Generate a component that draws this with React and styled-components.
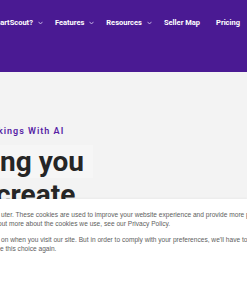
import React from 'react';
import styled, { createGlobalStyle } from 'styled-components';

const GlobalStyle = createGlobalStyle`
  html, body {
    margin: 0;
    padding: 0;
    background: #f3f3f3;
    overflow: hidden;
  }
  body {
    font-family: Roboto, "Liberation Sans", sans-serif;
  }
`;

const Page = styled.div`
  width: 247px;
  height: 296px;
  display: flex;
  flex-direction: column;
  overflow: hidden;
  background: #f3f3f3;
`;

const Header = styled.header`
  flex: 0 0 72px;
  background: #4a1a93;
  display: flex;
  justify-content: flex-end;
  align-items: flex-start;
  padding: 18px 7px 0 0;
  box-sizing: border-box;
  overflow: hidden;
`;

const Nav = styled.nav`
  display: flex;
  align-items: center;
  gap: 12px;
  flex-shrink: 0;
`;

const NavItem = styled.a`
  display: flex;
  align-items: center;
  gap: 5px;
  flex-shrink: 0;
  color: #ffffff;
  font-family: Roboto, "Liberation Sans", sans-serif;
  font-weight: 700;
  font-size: 7.5px;
  line-height: 10px;
  white-space: nowrap;
  margin-left: ${({ $push }) => ($push ? '4px' : '0')};
`;

const Chevron = () => (
  <svg width="5" height="4" viewBox="0 0 5 4" fill="none">
    <polyline points="0.5,0.8 2.5,3 4.5,0.8" stroke="#d9cdf0" strokeWidth="0.8" />
  </svg>
);

const Hero = styled.section`
  flex: 0 0 127px;
  padding-top: 54px;
  box-sizing: border-box;
  overflow: hidden;
`;

const Eyebrow = styled.div`
  color: #571ea5;
  font-family: Roboto, "Liberation Sans", sans-serif;
  font-weight: 600;
  font-size: 9px;
  line-height: 11px;
  letter-spacing: 1px;
  white-space: nowrap;
  margin-left: -2px;
`;

const Heading = styled.h1`
  margin: 8px 0 0 0;
  color: #262626;
  font-family: Roboto, "Liberation Sans", sans-serif;
  font-weight: 700;
  font-size: 28px;
  line-height: 33px;
  white-space: nowrap;
`;

const HeadLine = styled.span`
  display: inline-block;
  background: ${({ $hl }) => ($hl ? '#f6f6f6' : 'transparent')};
  padding-right: ${({ $hl }) => ($hl ? '9px' : '0')};
  margin-left: ${({ $shift }) => $shift || '0'};
`;

const Banner = styled.div`
  flex: 1;
  background: #ffffff;
  padding: 11px 0 0 0;
  box-sizing: border-box;
  overflow: hidden;
  box-shadow: 0 -1px 2px rgba(0, 0, 0, 0.04);
`;

const Para = styled.p`
  margin: 0 0 7px 0;
`;

const Line = styled.span`
  display: block;
  color: #5e5e5e;
  font-family: "Liberation Sans", Arial, sans-serif;
  font-size: 6.6px;
  line-height: 9px;
  white-space: nowrap;
  margin-left: ${({ $shift }) => $shift || '0'};
`;

export default function App() {
  return (
    <>
      <GlobalStyle />
      <Page>
        <Header>
          <Nav>
            <NavItem>Why SmartScout?<Chevron /></NavItem>
            <NavItem>Features<Chevron /></NavItem>
            <NavItem>Resources<Chevron /></NavItem>
            <NavItem>Seller Map</NavItem>
            <NavItem $push>Pricing</NavItem>
          </Nav>
        </Header>

        <Hero>
          <Eyebrow>kings With AI</Eyebrow>
          <Heading>
            <HeadLine $hl>ng you</HeadLine>
            <br />
            <HeadLine $shift="-4px">create</HeadLine>
          </Heading>
        </Hero>

        <Banner>
          <Para>
            <Line $shift="1px">uter. These cookies are used to improve your website experience and provide more personalized services to you</Line>
            <Line $shift="-2px">out more about the cookies we use, see our Privacy Policy.</Line>
          </Para>
          <Para>
            <Line $shift="1px">on when you visit our site. But in order to comply with your preferences, we'll have to use just one tiny cookie</Line>
            <Line>e this choice again.</Line>
          </Para>
        </Banner>
      </Page>
    </>
  );
}
